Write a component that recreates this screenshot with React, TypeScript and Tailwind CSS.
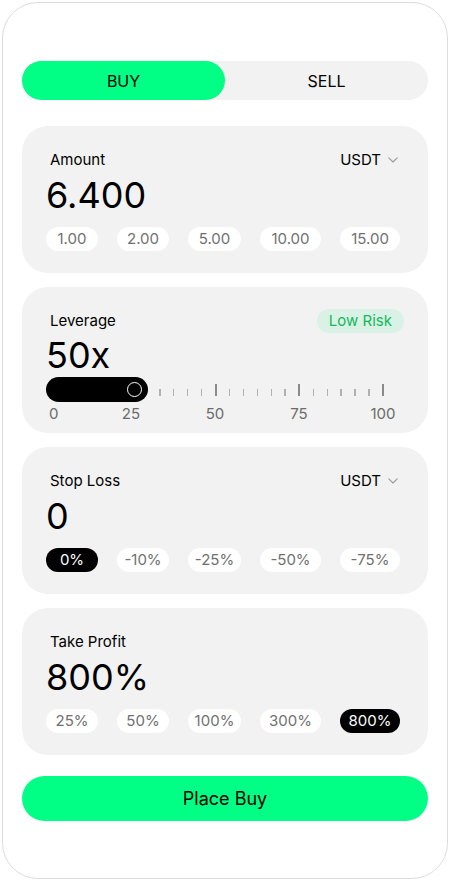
import React from "react";

const GREEN = "bg-[#00ff84]";

function Chevron() {
  return (
    <svg width="10" height="6" viewBox="0 0 10 6" fill="none" className="ml-[7px]">
      <path d="M0.8 0.8 L5 5 L9.2 0.8" stroke="#9a9a9a" strokeWidth="1.1" strokeLinecap="round" strokeLinejoin="round" />
    </svg>
  );
}

const widths = ["w-[52px]", "w-[52px]", "w-[53px]", "w-[61px]", "w-[60px]"];

function Chips({ items, active }: { items: string[]; active?: number }) {
  return (
    <div className="mt-[14px] flex gap-[19px]">
      {items.map((t, i) => (
        <div
          key={t}
          className={`${widths[i]} flex h-6 items-center justify-center rounded-full text-[15px] ${
            i === active ? "bg-black text-white" : "bg-white text-[#707070]"
          }`}
        >
          {t}
        </div>
      ))}
    </div>
  );
}

function Card({ label, value, right, chips, active }: { label: string; value: string; right?: boolean; chips: string[]; active?: number }) {
  return (
    <div className="rounded-[26px] bg-[#f2f2f2] px-6 pt-[24px] pb-[22px]">
      <div className="flex h-5 items-center justify-between pl-1 pr-[6px]">
        <span className="text-[15px] leading-5 text-black">{label}</span>
        {right && (
          <span className="flex items-center text-[15px] leading-5 text-black">
            USDT
            <Chevron />
          </span>
        )}
      </div>
      <div className="mt-[7px] text-[36px] leading-none text-black">{value}</div>
      <Chips items={chips} active={active} />
    </div>
  );
}

function LeverageCard() {
  const ticks = Array.from({ length: 17 }, (_, i) => i);
  return (
    <div className="rounded-[26px] bg-[#f2f2f2] px-6 pt-[24px] pb-[9px]">
      <div className="flex h-5 items-center justify-between pl-1">
        <span className="text-[15px] leading-5 text-black">Leverage</span>
        <span className="flex h-6 items-center rounded-full bg-[#d9f2e5] px-3 text-[15px] text-[#15b85c]">Low Risk</span>
      </div>
      <div className="mt-[6px] text-[36px] leading-none text-black">50x</div>
      <div className="mt-1 flex h-[25px] items-center">
        <div className="relative h-[25px] w-[102px] rounded-full bg-black">
          <div className="absolute right-[6px] top-[5px] h-[15px] w-[15px] rounded-full border-[1.5px] border-white bg-black" />
        </div>
        <div className="ml-[11px] flex h-[12px] w-[225px] items-end justify-between">
          {ticks.map((i) =>
            i % 6 === 4 ? (
              <div key={i} className="h-[12px] w-[2px] bg-[#8a8a8a]" />
            ) : (
              <div key={i} className="h-[7px] w-[1.5px] bg-[#b0b0b0]" />
            )
          )}
        </div>
      </div>
      <div className="mt-[2px] flex h-5 items-center text-[15px] leading-5 text-[#6b6b6b]">
        <span className="ml-[3px] w-[10px]">0</span>
        <span className="ml-[52px] w-[40px] text-center">25</span>
        <span className="ml-[44px] w-[40px] text-center">50</span>
        <span className="ml-[44px] w-[40px] text-center">75</span>
        <span className="ml-[44px] w-[40px] text-center">100</span>
      </div>
    </div>
  );
}

export default function App() {
  return (
    <div className="h-[882px] w-[450px] bg-white p-[2px] [font-family:Inter,'Noto_Sans',sans-serif]">
      <div className="flex h-[877px] w-[446px] flex-col rounded-[36px] border border-[#dcdcdc] px-[19px] pt-[58px]">
        <div className="flex h-[39px] rounded-full bg-[#f2f2f2]">
          <div className={`flex flex-1 items-center justify-center rounded-full ${GREEN} text-[16px] text-black`}>BUY</div>
          <div className="flex flex-1 items-center justify-center text-[16px] text-black">SELL</div>
        </div>
        <div className="mt-[26px] flex flex-col gap-[14px]">
          <Card label="Amount" value="6.400" right chips={["1.00", "2.00", "5.00", "10.00", "15.00"]} />
          <LeverageCard />
          <Card label="Stop Loss" value="0" right chips={["0%", "-10%", "-25%", "-50%", "-75%"]} active={0} />
          <Card label="Take Profit" value="800%" chips={["25%", "50%", "100%", "300%", "800%"]} active={4} />
        </div>
        <button className={`mt-[21px] flex h-[45px] items-center justify-center rounded-full ${GREEN} text-[18px] text-black`}>
          Place Buy
        </button>
      </div>
    </div>
  );
}
